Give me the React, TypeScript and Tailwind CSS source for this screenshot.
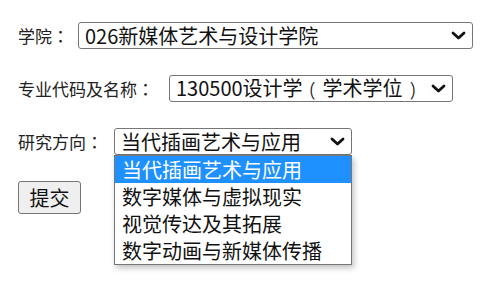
import React from 'react';

const Chevron: React.FC = () => (
  <svg width="15" height="9" viewBox="0 0 15 9" className="shrink-0">
    <polyline points="2,2 7.5,7 13,2" fill="none" stroke="#111" strokeWidth="2.8" strokeLinecap="round" strokeLinejoin="round" />
  </svg>
);

// centred full-width punctuation, as in the screenshot
const P: React.FC<{ c: string }> = ({ c }) => <span className="font-['Noto_Sans_CJK_TC',sans-serif]">{c}</span>;
const Paren: React.FC<{ c: string }> = ({ c }) => (
  <span className="inline-block w-[1em] text-center font-['Noto_Sans',sans-serif] font-light">{c}</span>
);

const FakeSelect: React.FC<{ value: React.ReactNode; width: string; children?: React.ReactNode }> = ({ value, width, children }) => (
  <div className={`relative ${width}`}>
    <div className="flex h-[27px] items-center justify-between rounded-[3px] border border-[#767676] bg-white pl-[6px] pr-[6px] text-[20px] leading-none text-[#111]">
      <span className="whitespace-nowrap">{value}</span>
      <Chevron />
    </div>
    {children}
  </div>
);

const options = ['当代插画艺术与应用', '数字媒体与虚拟现实', '视觉传达及其拓展', '数字动画与新媒体传播'];

export default function App() {
  return (
    <div className="h-[303px] w-[500px] bg-white pl-[18px] pt-[22px] font-['Noto_Sans_CJK_SC','Noto_Sans',sans-serif] text-[#222]">
      <div className="flex flex-col gap-[26px]">
        <div className="flex h-[27px] items-center">
          <span className="w-[60px] text-[17px]">学院<P c="：" /></span>
          <FakeSelect value="026新媒体艺术与设计学院" width="w-[395px]" />
        </div>
        <div className="flex h-[27px] items-center">
          <span className="w-[151px] text-[17px]">专业代码及名称<P c="：" /></span>
          <FakeSelect
            value={<>130500设计学<Paren c="(" />学术学位<Paren c=")" /></>}
            width="w-[284px]"
          />
        </div>
        <div className="flex h-[27px] items-center">
          <span className="w-[96px] text-[17px]">研究方向<P c="：" /></span>
          <FakeSelect value="当代插画艺术与应用" width="w-[238px]">
            <ul className="absolute left-0 top-[27px] z-10 w-[238px] border border-[#767676] bg-white shadow-[2px_3px_6px_rgba(0,0,0,0.25)]">
              {options.map((o, i) => (
                <li
                  key={o}
                  className={
                    i === 0
                      ? 'flex h-[27px] items-center bg-[#1e90ff] pl-[7px] text-[20px] leading-none text-white'
                      : 'flex h-[27px] items-center pl-[7px] text-[20px] leading-none text-[#111]'
                  }
                >
                  {o}
                </li>
              ))}
            </ul>
          </FakeSelect>
        </div>
        <div>
          <button className="h-[33px] w-[63px] rounded-[3px] border border-[#767676] bg-[#efefef] text-[20px] leading-none text-[#111]">
            提交
          </button>
        </div>
      </div>
    </div>
  );
}
